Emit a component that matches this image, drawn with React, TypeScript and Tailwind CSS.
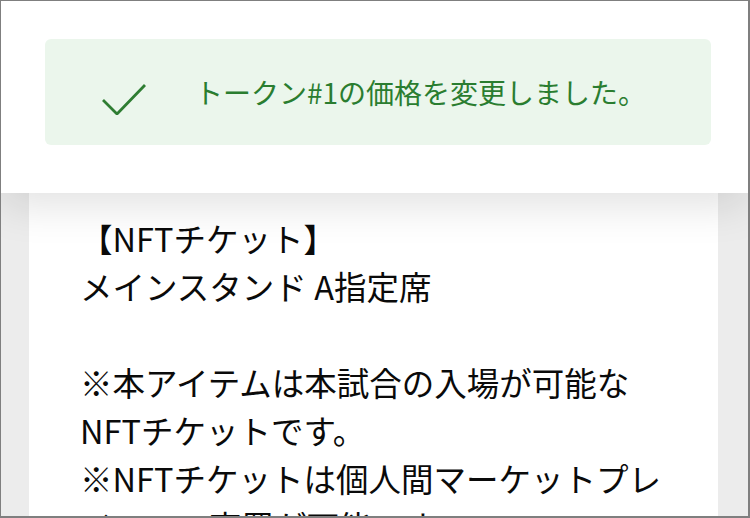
import React from "react";

export default function App() {
  return (
    <div className="w-[750px] h-[518px] overflow-hidden border-l border-t border-r-2 border-b-2 border-[#7f7f7f] bg-[#ececec] flex flex-col font-['Noto_Sans_CJK_JP',sans-serif]">
      <header className="relative z-10 h-[192px] shrink-0 bg-white pl-[44px] pr-[37px] pt-[38px] shadow-[0_12px_40px_rgba(0,0,0,0.12)]">
        <div className="h-[106px] rounded-[6px] bg-[#ebf6ec] flex items-center">
          <svg
            className="ml-[57px] mt-[14px] shrink-0"
            width="44"
            height="32"
            viewBox="0 0 44 32"
            fill="none"
          >
            <polyline
              points="1,17 15,31 43,2"
              stroke="#2e7d32"
              strokeWidth="2.8"
              fill="none"
            />
          </svg>
          <p className="ml-[49px] text-[28px] leading-none text-[#2a7d30] tracking-normal">
            トークン#1の価格を変更しました。
          </p>
        </div>
      </header>
      <main className="flex-1 min-h-0 pl-[28px] pr-[30px]">
        <div className="h-full bg-white pl-[51px] pr-[44px] pt-[21px] text-[32.5px] leading-[48px] text-[#0a0a0a]">
          <p>【NFTチケット】</p>
          <p>メインスタンド A指定席</p>
          <p>&nbsp;</p>
          <p>※本アイテムは本試合の入場が可能なNFTチケットです。</p>
          <p>※NFTチケットは個人間マーケットプレイスでの売買が可能です。</p>
        </div>
      </main>
    </div>
  );
}
